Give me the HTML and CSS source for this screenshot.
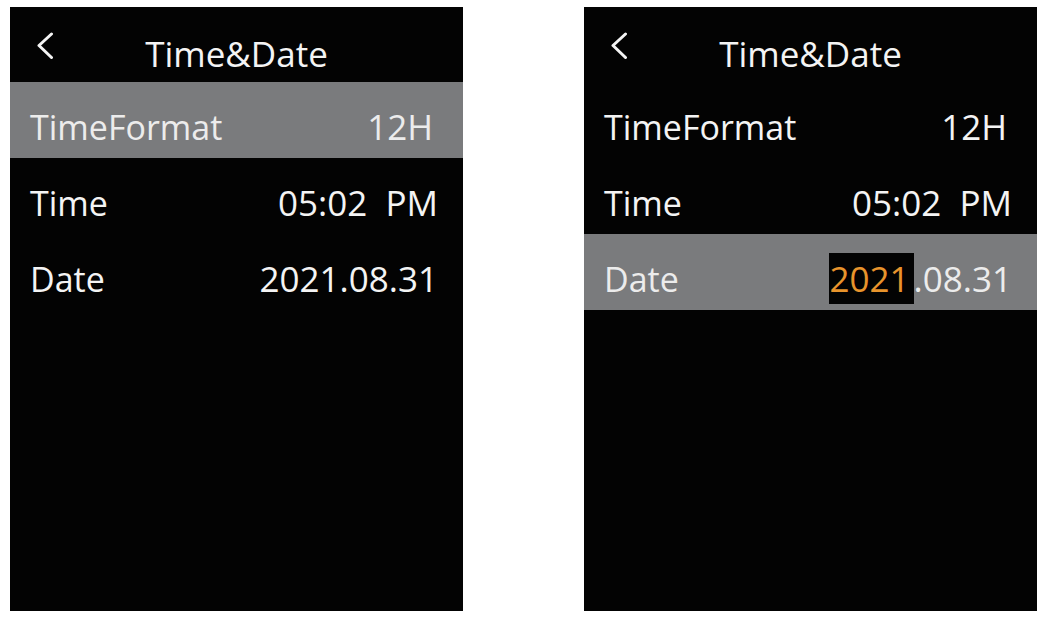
FILE: index.html
```html
<!DOCTYPE html>
<html lang="en">
<head>
    <meta charset="UTF-8">
    <meta name="viewport" content="width=device-width, initial-scale=1.0">
    <title>Time&amp;Date</title>
    <link rel="stylesheet" href="styles.css">
</head>
<body>

    <div class="page">

        <!-- Schermata 1: riga TimeFormat selezionata -->
        <div class="screen">
            <div class="topbar">
                <svg class="back" width="18" height="28" viewBox="0 0 18 28">
                    <path d="M15.5 2 L3 13.5 L15.5 25.5" fill="none" stroke="#f4f4f4" stroke-width="3" stroke-linecap="round" stroke-linejoin="round"/>
                </svg>
                <div class="title">Time&amp;Date</div>
                <span></span>
            </div>
            <div class="row selected">
                <span class="label">TimeFormat</span>
                <span class="value short">12H</span>
            </div>
            <div class="row">
                <span class="label">Time</span>
                <span class="value">05:02  PM</span>
            </div>
            <div class="row">
                <span class="label">Date</span>
                <span class="value">2021.08.31</span>
            </div>
        </div>

        <!-- Schermata 2: modifica anno -->
        <div class="screen">
            <div class="topbar">
                <svg class="back" width="18" height="28" viewBox="0 0 18 28">
                    <path d="M15.5 2 L3 13.5 L15.5 25.5" fill="none" stroke="#f4f4f4" stroke-width="3" stroke-linecap="round" stroke-linejoin="round"/>
                </svg>
                <div class="title">Time&amp;Date</div>
                <span></span>
            </div>
            <div class="row">
                <span class="label">TimeFormat</span>
                <span class="value short">12H</span>
            </div>
            <div class="row">
                <span class="label">Time</span>
                <span class="value">05:02  PM</span>
            </div>
            <div class="row selected">
                <span class="label">Date</span>
                <span class="value"><span class="editing">2021</span>.08.31</span>
            </div>
        </div>

    </div>

</body>
</html>
```

FILE: styles.css
```css
body { margin: 0; background: #fff; font-family: "Open Sans", "Noto Sans", sans-serif; }
.page { display: flex; gap: 121px; padding: 7px 0 0 10px; }
.screen { width: 453px; height: 604px; background: #030303; color: #f4f4f4; }

.topbar { display: grid; grid-template-columns: 1fr auto 1fr; height: 75px; box-sizing: border-box; padding-top: 25px; }
.back { margin-left: 26px; }
.title { margin-top: 2px; font-size: 35px; line-height: 40px; }

.row { display: flex; justify-content: space-between; height: 76px; box-sizing: border-box; padding: 14px 25px 0 20px; font-size: 34px; line-height: 62px; }
.row.selected { background: #7a7b7d; color: #ececec; }
.value { font-size: 35px; white-space: pre; }
.value.short { margin-right: 5px; }
.editing { background: #030303; color: #e8942c; padding: 2px 4px 2px 1px; }
```
